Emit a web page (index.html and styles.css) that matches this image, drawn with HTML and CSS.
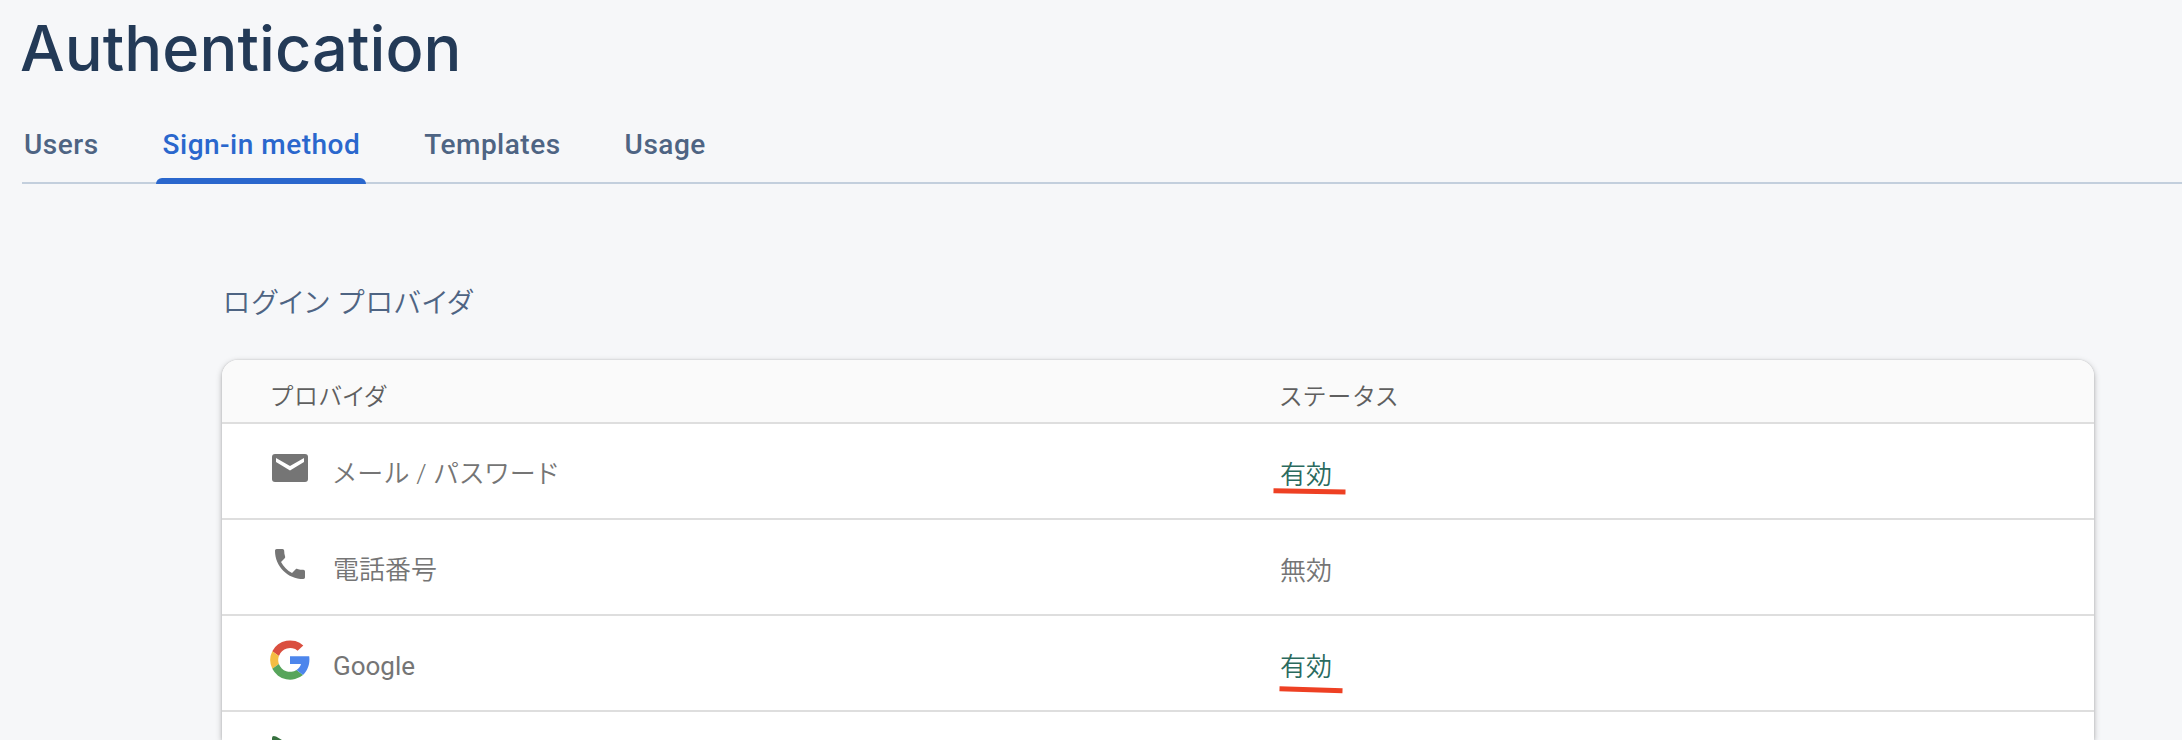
FILE: index.html
```
<!DOCTYPE html>
<html lang="ja">
<head>
    <meta charset="UTF-8">
    <meta name="viewport" content="width=device-width, initial-scale=1.0">
    <title>Authentication</title>
    <link rel="stylesheet" href="styles.css">
</head>
<body>
    <h1 class="page-title">Authentication</h1>

    <nav class="tabs">
        <a class="tab">Users</a>
        <a class="tab active">Sign-in method</a>
        <a class="tab">Templates</a>
        <a class="tab">Usage</a>
    </nav>

    <main class="content">
        <h2 class="section-title">ログイン プロバイダ</h2>

        <div class="card">
            <div class="row header">
                <div class="cell">プロバイダ</div>
                <div class="cell status-head">ステータス</div>
            </div>
            <div class="row">
                <div class="cell provider">
                    <svg class="icon" viewBox="0 0 40 40">
                        <path fill="#757575" d="M5 6h30a3 3 0 0 1 3 3v22a3 3 0 0 1-3 3H5a3 3 0 0 1-3-3V9a3 3 0 0 1 3-3z"/>
                        <path fill="#fff" d="M6 10l14 8 14-8v4l-14 8.500-14-8.500z"/>
                    </svg>
                    <span class="name name-mail">メール / パスワード</span>
                </div>
                <div class="cell">
                    <span class="status enabled">有効<svg class="mark mark-mail" viewBox="0 0 74 8"><path d="M0.500 2.800L72.500 4"/></svg></span>
                </div>
            </div>
            <div class="row">
                <div class="cell provider">
                    <svg class="icon" viewBox="0 0 24 24">
                        <path fill="#757575" d="M6.620 10.790c1.440 2.830 3.760 5.140 6.590 6.590l2.200-2.200c.270-.270.670-.360 1.020-.240 1.120.370 2.330.570 3.570.570.550 0 1 .450 1 1V20c0 .550-.450 1-1 1-9.390 0-17-7.610-17-17 0-.550.450-1 1-1h3.500c.550 0 1 .450 1 1 0 1.250.200 2.450.570 3.570.110.350.030.740-.250 1.020l-2.200 2.200z"/>
                    </svg>
                    <span class="name">電話番号</span>
                </div>
                <div class="cell">
                    <span class="status">無効</span>
                </div>
            </div>
            <div class="row">
                <div class="cell provider">
                    <svg class="icon" viewBox="0 0 40 40">
                        <path fill="#da4f3f" d="M2.300 11.200A20 20 0 0 1 33.300 5.400L27.600 10.700A12 12 0 0 0 8.900 16z"/>
                        <path fill="#f4bd42" d="M2.300 11.200L8.900 16A12 12 0 0 0 8.900 24L2.300 28.800A20 20 0 0 1 2.300 11.200z"/>
                        <path fill="#57a55b" d="M2.300 28.800L8.900 24A12 12 0 0 0 26.500 30L33 35A20 20 0 0 1 2.300 28.800z"/>
                        <path fill="#4d86ec" d="M20 16.300H39.200C40.200 23.500 37.800 30.600 33 35L26.500 30C28.800 28.500 30.400 26.300 31 24H20z"/>
                    </svg>
                    <span class="name name-latin">Google</span>
                </div>
                <div class="cell">
                    <span class="status enabled">有効<svg class="mark mark-google" viewBox="0 0 64 8"><path d="M0.500 2.800L63.500 4.800"/></svg></span>
                </div>
            </div>
            <div class="row">
                <div class="cell provider">
                    <svg class="icon" viewBox="0 0 40 40">
                        <path fill="#37713f" d="M2 2q0-3 4-1.500l29 17q3 2.500 0 5l-29 17q-4 1.500-4-1.500z"/>
                    </svg>
                </div>
            </div>
        </div>
    </main>
</body>
</html>
```

FILE: styles.css
```
* {
    margin: 0;
    padding: 0;
    box-sizing: border-box;
}

body {
    height: 740px;
    overflow: hidden;
    background: #f6f7f9;
    font-family: Roboto, "Noto Sans CJK JP", sans-serif;
    color: #757575;
}

.page-title {
    height: 110px;
    padding: 9px 0 0 20px;
    font-family: Inter, "Noto Sans CJK JP", sans-serif;
    font-size: 63px;
    font-weight: 500;
    line-height: 78px;
    letter-spacing: 0.1px;
    color: #233a57;
}

.tabs {
    display: flex;
    gap: 52px;
    height: 74px;
    margin-left: 22px;
    border-bottom: 2px solid #c3cfdd;
}

.tab {
    height: 74px;
    padding: 17px 6px 0;
    font-size: 28px;
    font-weight: 500;
    line-height: 36px;
    letter-spacing: 0.5px;
    color: #4e6483;
}

.tab:first-child {
    padding-left: 2px;
}

.tab.active {
    position: relative;
    color: #2a67cd;
}

.tab.active::after {
    content: "";
    position: absolute;
    left: -1px;
    right: 0;
    bottom: 0;
    height: 6px;
    border-radius: 6px 6px 0 0;
    background: #2a67cd;
}

.content {
    padding: 98px 88px 0 222px;
}

.section-title {
    height: 78px;
    padding: 2px 0 0 1px;
    font-size: 28px;
    font-weight: 350;
    line-height: 40px;
    letter-spacing: 1.3px;
    font-feature-settings: "palt";
    color: #4e6483;
}

.card {
    height: 380px;
    background: #fff;
    border-radius: 16px 16px 0 0;
    overflow: hidden;
    box-shadow: 0 2px 6px rgba(0, 0, 0, 0.28), 0 0 2px rgba(0, 0, 0, 0.15);
}

.row {
    display: grid;
    grid-template-columns: 1058px 1fr;
    height: 96px;
    border-bottom: 2px solid #dedede;
}

.row.header {
    height: 64px;
    padding-top: 19px;
    background: #fafafa;
    font-size: 24px;
    font-weight: 350;
    line-height: 36px;
    color: #5f5f5f;
}

.header .cell {
    letter-spacing: 1.2px;
    font-feature-settings: "palt";
}

.header .status-head {
    letter-spacing: 2px;
}

.cell:first-child {
    padding-left: 48px;
}

.header .cell:first-child {
    padding-left: 49px;
}

.provider {
    display: flex;
    gap: 23px;
    padding-top: 24px;
}

.icon {
    width: 40px;
    height: 40px;
}

.name,
.status {
    font-size: 26px;
    font-weight: 350;
    line-height: 40px;
}

.name {
    padding-top: 6px;
}

.name-mail {
    letter-spacing: 1.7px;
    word-spacing: -2.5px;
    font-feature-settings: "palt";
}

.name-latin {
    font-weight: 400;
}

.status {
    position: relative;
    display: inline-block;
    margin-top: 31px;
}

.enabled {
    color: #2a6a5e;
}

/* red underline strokes */
.mark {
    position: absolute;
    height: 8px;
    fill: none;
    stroke: #ee4023;
    stroke-width: 5;
}

.mark-mail {
    left: -7px;
    top: 33px;
    width: 74px;
}

.mark-google {
    left: -1px;
    top: 39px;
    width: 64px;
}
```
